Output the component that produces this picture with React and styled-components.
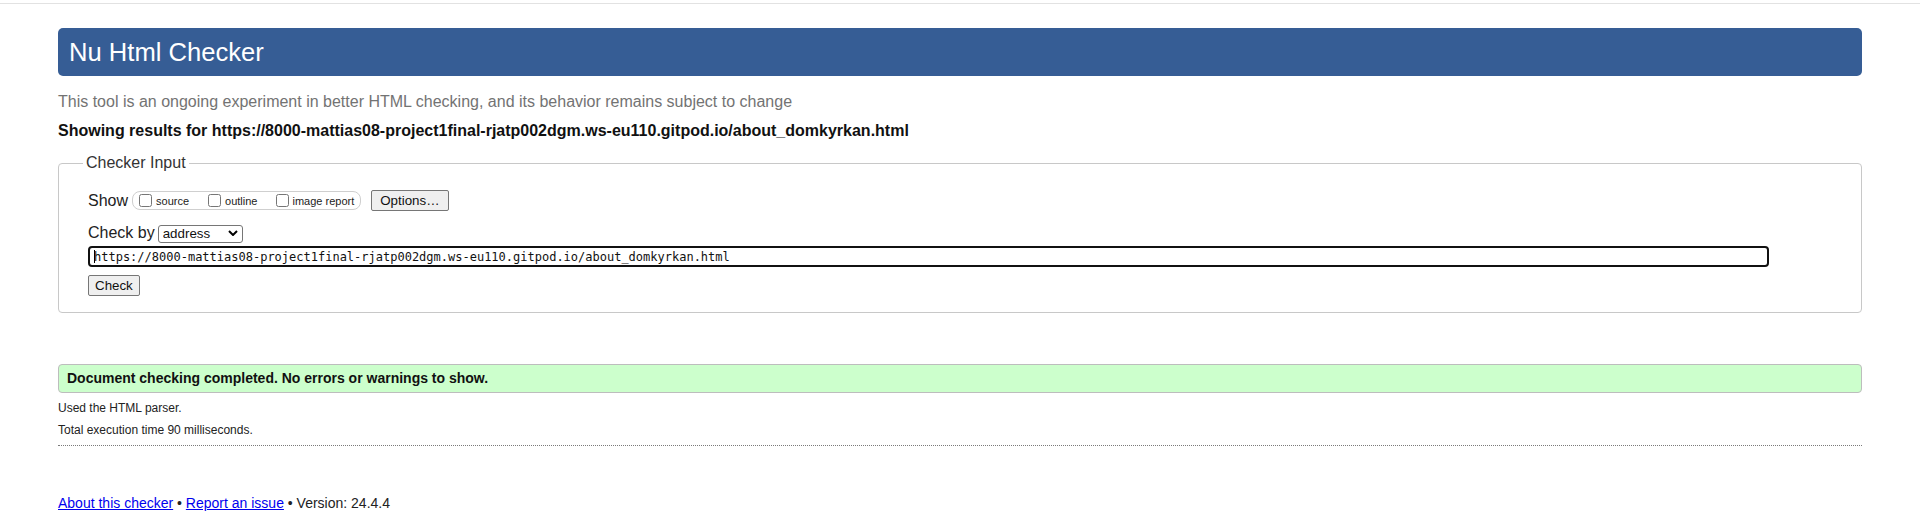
import React from "react";
import styled, { createGlobalStyle } from "styled-components";

const GlobalStyle = createGlobalStyle`
  html, body {
    margin: 0;
    padding: 0;
    background: #fff;
  }
  body {
    font-family: "Liberation Sans", Arial, sans-serif;
    color: #111;
  }
`;

const TopRule = styled.div`
  height: 3px;
  border-bottom: 1px solid #e2e2e2;
`;

const Page = styled.div`
  padding: 0 58px;
`;

const Header = styled.h1`
  margin: 24px 0 0;
  padding: 9px 11px;
  background: #365d95;
  color: #fff;
  font-weight: normal;
  font-size: 25.6px;
  line-height: 30px;
  border-radius: 5px;
`;

const Intro = styled.p`
  margin: 17px 0 0;
  font-size: 16px;
  line-height: 18px;
  color: #737373;
`;

const Results = styled.p`
  margin: 11px 0 0;
  font-size: 16px;
  line-height: 18px;
  font-weight: bold;
  color: #111;
`;

const Fieldset = styled.fieldset`
  margin: 14px 0 0;
  padding: 18px 29px 16px;
  border: 1px solid #c8c8c8;
  border-radius: 4px;
  min-width: 0;
`;

const Legend = styled.legend`
  margin-left: -5px;
  padding: 0 3px;
  font-size: 16px;
  line-height: 18px;
  color: #333;
`;

const Row = styled.div`
  display: flex;
  align-items: center;
  height: ${(p) => p.$h || 21}px;
  margin-top: ${(p) => p.$mt || 0}px;
`;

const Label = styled.span`
  font-size: 16px;
  line-height: 18px;
  color: #222;
  margin-right: ${(p) => p.$gap || 4}px;
`;

const OptionGroup = styled.div`
  display: flex;
  align-items: center;
  height: 19px;
  box-sizing: border-box;
  padding: 0 6px;
  border: 1px solid #cfcfcf;
  border-radius: 8px;
`;

const OptionLabel = styled.label`
  display: flex;
  align-items: center;
  gap: ${(p) => p.$gap || 4}px;
  margin-left: ${(p) => p.$ml || 0}px;
  font-size: 11px;
  color: #222;
`;

const Checkbox = styled.input.attrs({ type: "checkbox" })`
  margin: 0;
  width: 13px;
  height: 13px;
`;

const Button = styled.button`
  box-sizing: border-box;
  height: 21px;
  margin-left: ${(p) => p.$ml || 0}px;
  padding: 1px ${(p) => p.$px || 6}px;
  background: #efefef;
  border: 1px solid #767676;
  border-radius: 2px;
  font-family: "Liberation Sans", Arial, sans-serif;
  font-size: 13.33px;
  color: #111;
`;

const SelectWrap = styled.div`
  position: relative;
  width: 85px;
  height: 18px;
`;

const Select = styled.select`
  appearance: none;
  box-sizing: border-box;
  width: 100%;
  height: 100%;
  margin: 0;
  padding: 0 0 0 4px;
  background: #fff;
  border: 1px solid #767676;
  border-radius: 3px;
  font-family: "Liberation Sans", Arial, sans-serif;
  font-size: 13.33px;
  color: #111;
`;

const Chevron = styled.svg`
  position: absolute;
  right: 5px;
  top: 6px;
  pointer-events: none;
`;

const UrlWrap = styled.div`
  position: relative;
  width: calc(100% - 63px);
  margin-top: 4px;
`;

const UrlInput = styled.input`
  display: block;
  box-sizing: border-box;
  width: 100%;
  height: 21px;
  margin: 0;
  padding: 0 4px;
  border: 2px solid #111;
  border-radius: 4px;
  font-family: "DejaVu Sans Mono", "Liberation Mono", monospace;
  font-size: 12px;
  color: #111;
  outline: none;
`;

const Caret = styled.span`
  position: absolute;
  left: 6px;
  top: 4px;
  width: 1px;
  height: 13px;
  background: #000;
`;

const Success = styled.div`
  margin-top: 51px;
  padding: 0 8px;
  background: #ccffcc;
  border: 1px solid #bdbdbd;
  border-radius: 4px;
  font-size: 14px;
  font-weight: bold;
  line-height: 27px;
  color: #111;
`;

const Note = styled.p`
  margin: ${(p) => p.$mt}px 0 0;
  font-size: 12px;
  line-height: 14px;
  color: #222;
`;

const Dotted = styled.hr`
  margin: 8px 0 0;
  border: 0;
  border-top: 1px dotted #7a7a7a;
`;

const Footer = styled.p`
  margin: 49px 0 0;
  font-size: 14px;
  line-height: 16px;
  color: #222;
`;

const Link = styled.a`
  color: #0000ee;
  text-decoration: underline;
`;

export default function App() {
  const url =
    "https://8000-mattias08-project1final-rjatp002dgm.ws-eu110.gitpod.io/about_domkyrkan.html";
  return (
    <>
      <GlobalStyle />
      <TopRule />
      <Page>
        <Header>Nu Html Checker</Header>
        <Intro>
          This tool is an ongoing experiment in better HTML checking, and its behavior remains
          subject to change
        </Intro>
        <Results>Showing results for {url}</Results>

        <Fieldset>
          <Legend>Checker Input</Legend>
          <Row>
            <Label>Show</Label>
            <OptionGroup>
              <OptionLabel>
                <Checkbox />
                source
              </OptionLabel>
              <OptionLabel $ml={19}>
                <Checkbox />
                outline
              </OptionLabel>
              <OptionLabel $ml={19} $gap={3}>
                <Checkbox />
                image report
              </OptionLabel>
            </OptionGroup>
            <Button $ml={10} $px={8}>Options…</Button>
          </Row>
          <Row $h={18} $mt={13}>
            <Label $gap={3}>Check by</Label>
            <SelectWrap>
              <Select defaultValue="address">
                <option value="address">address</option>
                <option value="upload">file upload</option>
                <option value="text">text input</option>
              </Select>
              <Chevron width="10" height="6" viewBox="0 0 10 6">
                <path d="M1 1 L5 5 L9 1" fill="none" stroke="#000" strokeWidth="2" />
              </Chevron>
            </SelectWrap>
          </Row>
          <UrlWrap>
            <UrlInput defaultValue={url} />
            <Caret />
          </UrlWrap>
          <Row $mt={8}>
            <Button>Check</Button>
          </Row>
        </Fieldset>

        <Success>Document checking completed. No errors or warnings to show.</Success>
        <Note $mt={8}>Used the HTML parser.</Note>
        <Note $mt={8}>Total execution time 90 milliseconds.</Note>
        <Dotted />

        <Footer>
          <Link href="#about">About this checker</Link> •{" "}
          <Link href="#issue">Report an issue</Link> • Version: 24.4.4
        </Footer>
      </Page>
    </>
  );
}
